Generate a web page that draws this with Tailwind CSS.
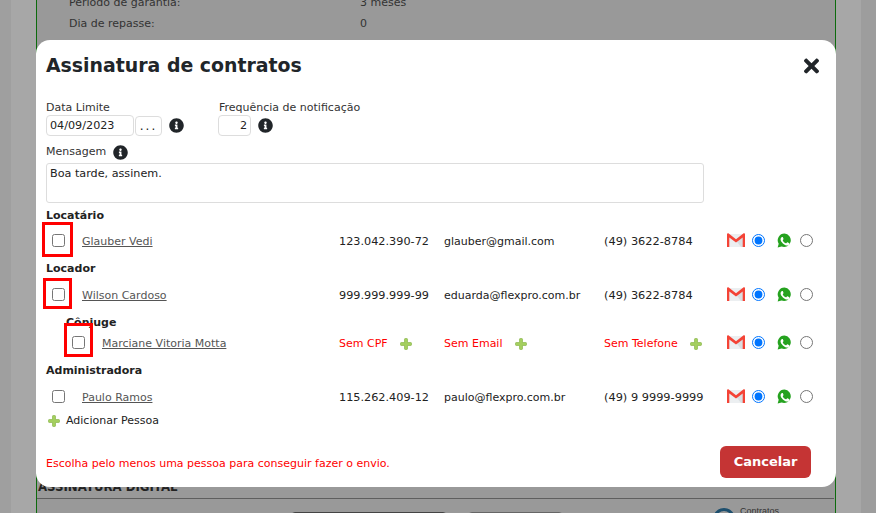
<!DOCTYPE html>
<html lang="pt-BR">
<head>
  <meta charset="UTF-8">
  <title>Assinatura de contratos</title>
  <script src="https://cdn.jsdelivr.net/npm/@tailwindcss/browser@4"></script>
</head>
<body class="relative w-[876px] h-[513px] overflow-hidden bg-[#a0a0a0] font-['DejaVu_Sans',sans-serif] text-[11px] text-[#222]">

<svg class="hidden">
  <symbol id="info" viewBox="0 0 512 512"><path fill="currentColor" d="M256 8C119.043 8 8 119.083 8 256c0 136.997 111.043 248 248 248s248-111.003 248-248C504 119.083 392.957 8 256 8zm0 110c23.196 0 42 18.804 42 42s-18.804 42-42 42-42-18.804-42-42 18.804-42 42-42zm56 254c0 6.627-5.373 12-12 12h-88c-6.627 0-12-5.373-12-12v-24c0-6.627 5.373-12 12-12h12v-64h-12c-6.627 0-12-5.373-12-12v-24c0-6.627 5.373-12 12-12h64c6.627 0 12 5.373 12 12v100h12c6.627 0 12 5.373 12 12v24z"/></symbol>
  <symbol id="plus" viewBox="0 0 12 12"><path fill="#a4cf5e" stroke="#7fae3c" stroke-width="0.6" d="M4.5 1.2c0-.4.3-.7.7-.7h1.6c.4 0 .7.3.7.7v3.3h3.3c.4 0 .7.3.7.7v1.6c0 .4-.3.7-.7.7H7.5v3.3c0 .4-.3.7-.7.7H5.2c-.4 0-.7-.3-.7-.7V7.5H1.2c-.4 0-.7-.3-.7-.7V5.2c0-.4.3-.7.7-.7h3.3z"/></symbol>
  <symbol id="gmail" viewBox="0 0 18 14"><path fill="#eceff1" d="M1 1h16v13H1z"/><path fill="#d9dee1" d="M9 7.5 17 1v13h-3z"/><path fill="#f44336" d="M0 1.2C0 .3 1 0 1.700.500L9 6.200 16.300.500C17 0 18 .3 18 1.200V14h-2.300V4.400L9 9.400 2.300 4.400V14H0z"/></symbol>
  <symbol id="whatsapp" viewBox="0 0 16 16"><path fill="#25a21f" d="M8 .5a7.200 7.200 0 0 0-6.200 10.900L.7 15.500l4.200-1.100A7.200 7.200 0 1 0 8 .5z"/><path fill="#fff" d="M5.700 4.200c-.3 0-.7.100-1 .5-.4.400-.9 1-.9 2.100 0 1.200.9 2.400 1 2.600.2.200 1.700 2.700 4.200 3.600 1.800.6 2.300.3 2.700.2.500-.1 1.300-.6 1.400-1.100.2-.6.200-1 .1-1.100-.1-.2-.2-.2-.5-.4l-1.500-.7c-.2-.1-.4-.1-.6.100l-.7.900c-.1.200-.3.200-.5.100-.9-.4-1.600-.8-2.200-1.500-.4-.5-.8-1-1-1.500-.1-.2 0-.3.100-.5l.4-.5.200-.4v-.4L6.300 4.600c-.1-.3-.3-.4-.6-.4z"/></symbol>
</svg>

<!-- fundo da pagina atras do modal -->
<div class="flex h-full">
  <div class="w-[11px] bg-[#9f9f9f]"></div>
  <div class="w-[25px] bg-[#a7a7a7]"></div>
  <div class="relative w-[800px] h-full flex flex-col bg-[#999] border-l border-r border-[#0d6b0d] text-[#333]">
    <div class="flex mt-[-7px] pl-[32px] h-[21px] items-center"><span class="w-[291px]">Período de garantia:</span><span>3 meses</span></div>
    <div class="flex pl-[32px] h-[21px] items-center"><span class="w-[291px]">Dia de repasse:</span><span>0</span></div>
    <div class="mt-auto">
      <div class="pl-[1px] font-bold text-[11.75px] text-[#222] leading-[12px]">ASSINATURA DIGITAL</div>
      <div class="mt-[5px] h-[1px] bg-[#5e5e5e] mr-[1px]"></div>
      <div class="flex h-[14px] relative">
        <div class="ml-[254px] mt-[13px] w-[156px] h-[8px] shrink-0 border border-[#444] rounded-sm"></div>
        <div class="ml-[21px] mt-[13px] w-[95px] h-[8px] shrink-0 border border-[#666] rounded-sm"></div>
        <div class="ml-[150px] mt-[9px] w-[22px] h-[22px] shrink-0 rounded-full border-[3px] border-[#1d4f6e]"></div>
        <div class="ml-[5px] mt-[6px] text-[9px] font-['Liberation_Sans',sans-serif]">Contratos</div>
      </div>
    </div>
  </div>
  <div class="w-[25px] bg-[#a7a7a7]"></div>
  <div class="flex-1 bg-[#9d9d9d]"></div>
</div>

<!-- modal -->
<div class="absolute left-[36px] top-[40px] w-[800px] h-[447px] bg-white rounded-[14px] pl-[10px] flex flex-col">
  <div class="flex items-center justify-between h-[22px] mt-[15px]">
    <h2 class="-mt-[2px] font-bold text-[18.9px] text-[#212529] leading-none">Assinatura de contratos</h2>
    <svg class="w-[15px] h-[22px] mr-[17px] text-[#212529]" viewBox="0 0 352 512"><path fill="currentColor" d="M242.72 256l100.07-100.07c12.28-12.28 12.28-32.19 0-44.48l-22.24-22.24c-12.28-12.28-32.19-12.28-44.48 0L176 189.28 75.930 89.210c-12.280-12.280-32.190-12.280-44.480 0L9.210 111.450c-12.280 12.280-12.280 32.190 0 44.480L109.280 256 9.210 356.070c-12.280 12.280-12.280 32.190 0 44.480l22.240 22.240c12.280 12.280 32.200 12.280 44.480 0L176 322.720l100.070 100.070c12.280 12.280 32.200 12.280 44.480 0l22.240-22.240c12.280-12.280 12.280-32.190 0-44.480L242.720 256z"/></svg>
  </div>

  <div class="flex mt-[24px]">
    <div class="w-[172px]">
      <div class="h-[14px] leading-[14px] text-[#333]">Data Limite</div>
      <div class="flex items-center">
        <input value="04/09/2023" class="w-[88px] h-[21px] px-[3px] border border-[#ddd] rounded-[4px] text-[11.2px] text-[#222]">
        <button class="ml-[1px] w-[27px] h-[20px] border border-[#ddd] rounded-[4px] text-[12px] tracking-[2px] leading-[18px]">...</button>
        <svg class="ml-[7px] w-[15px] h-[15px] text-[#212529]"><use href="#info"/></svg>
      </div>
    </div>
    <div>
      <div class="pl-[1px] h-[14px] leading-[14px] text-[#333]">Frequência de notificação</div>
      <div class="flex items-center">
        <input value="2" class="w-[33px] h-[21px] px-[3px] text-right border border-[#ddd] rounded-[4px] text-[11.2px] text-[#222]">
        <svg class="ml-[7px] w-[15px] h-[15px] text-[#212529]"><use href="#info"/></svg>
      </div>
    </div>
  </div>

  <div class="flex items-center mt-[9px] h-[15px] text-[#333]">Mensagem<svg class="ml-[7px] w-[15px] h-[15px] text-[#212529]"><use href="#info"/></svg></div>
  <textarea class="mt-[3px] w-[658px] h-[40px] px-[3px] py-[2px] border border-[#ddd] rounded-[3px] resize-none text-[11.2px] text-[#222]">Boa tarde, assinem.</textarea>

  <div class="mt-[6px] h-[14px] leading-[14px] font-bold text-[#222]">Locatário</div>
  <div class="flex items-center h-[24px] mt-[5px]">
    <div class="relative w-[36px] pl-[6px] flex items-center">
      <span class="absolute left-[-4px] top-[-12px] w-[31px] h-[35px] border-[3px] border-[#f00]"></span>
      <input type="checkbox" class="w-[13px] h-[13px]">
    </div>
    <a class="mt-[4px] w-[257px] underline text-[#555]">Glauber Vedi</a>
    <span class="mt-[4px] w-[105px] text-[11.25px]">123.042.390-72</span>
    <span class="mt-[4px] w-[160px]">glauber@gmail.com</span>
    <span class="mt-[4px] w-[123px] text-[11.35px]">(49) 3622-8784</span>
    <svg class="w-[18px] h-[14px]"><use href="#gmail"/></svg>
    <input type="radio" checked class="ml-[7px] w-[13px] h-[13px] accent-[#0075ff]">
    <svg class="ml-[12px] w-[15px] h-[15px]"><use href="#whatsapp"/></svg>
    <input type="radio" class="ml-[8px] w-[13px] h-[13px]">
  </div>

  <div class="mt-[10px] h-[14px] leading-[14px] font-bold text-[#222]">Locador</div>
  <div class="flex items-center h-[24px] mt-[6px]">
    <div class="relative w-[36px] pl-[6px] flex items-center">
      <span class="absolute left-[-3px] top-[-10px] w-[29px] h-[31px] border-[3px] border-[#f00]"></span>
      <input type="checkbox" class="w-[13px] h-[13px]">
    </div>
    <a class="mt-[4px] w-[257px] underline text-[#555]">Wilson Cardoso</a>
    <span class="mt-[4px] w-[105px] text-[11.25px]">999.999.999-99</span>
    <span class="mt-[4px] w-[160px]">eduarda@flexpro.com.br</span>
    <span class="mt-[4px] w-[123px] text-[11.35px]">(49) 3622-8784</span>
    <svg class="w-[18px] h-[14px]"><use href="#gmail"/></svg>
    <input type="radio" checked class="ml-[7px] w-[13px] h-[13px] accent-[#0075ff]">
    <svg class="ml-[12px] w-[15px] h-[15px]"><use href="#whatsapp"/></svg>
    <input type="radio" class="ml-[8px] w-[13px] h-[13px]">
  </div>

  <div class="ml-[20px] mt-[10px] h-[14px] leading-[14px] font-bold text-[#222]">Cônjuge</div>
  <div class="flex items-center h-[20px] mt-[2px]">
    <div class="relative w-[56px] pl-[26px] flex items-center">
      <span class="absolute left-[18px] top-[-13px] w-[29px] h-[34px] border-[3px] border-[#f00]"></span>
      <input type="checkbox" class="w-[13px] h-[13px]">
    </div>
    <a class="mt-[4px] w-[237px] underline text-[#555]">Marciane Vitoria Motta</a>
    <span class="mt-[4px] w-[105px] flex items-center text-[#f00]"><span class="w-[61px]">Sem CPF</span><svg class="w-[12px] h-[12px]"><use href="#plus"/></svg></span>
    <span class="mt-[4px] w-[160px] flex items-center text-[#f00]"><span class="w-[71px]">Sem Email</span><svg class="w-[12px] h-[12px]"><use href="#plus"/></svg></span>
    <span class="mt-[4px] w-[123px] flex items-center text-[#f00]"><span class="w-[86px]">Sem Telefone</span><svg class="w-[12px] h-[12px]"><use href="#plus"/></svg></span>
    <svg class="w-[18px] h-[14px]"><use href="#gmail"/></svg>
    <input type="radio" checked class="ml-[7px] w-[13px] h-[13px] accent-[#0075ff]">
    <svg class="ml-[12px] w-[15px] h-[15px]"><use href="#whatsapp"/></svg>
    <input type="radio" class="ml-[8px] w-[13px] h-[13px]">
  </div>

  <div class="mt-[12px] h-[14px] leading-[14px] font-bold text-[#222]">Administradora</div>
  <div class="flex items-center h-[24px] mt-[6px]">
    <div class="w-[36px] pl-[6px] flex items-center"><input type="checkbox" class="w-[13px] h-[13px]"></div>
    <a class="mt-[4px] w-[257px] underline text-[#555]">Paulo Ramos</a>
    <span class="mt-[4px] w-[105px] text-[11.25px]">115.262.409-12</span>
    <span class="mt-[4px] w-[160px]">paulo@flexpro.com.br</span>
    <span class="mt-[4px] w-[123px] text-[11.35px]">(49) 9 9999-9999</span>
    <svg class="w-[18px] h-[14px]"><use href="#gmail"/></svg>
    <input type="radio" checked class="ml-[7px] w-[13px] h-[13px] accent-[#0075ff]">
    <svg class="ml-[12px] w-[15px] h-[15px]"><use href="#whatsapp"/></svg>
    <input type="radio" class="ml-[8px] w-[13px] h-[13px]">
  </div>

  <div class="flex items-center mt-[6px] h-[14px] ml-[2px]"><svg class="w-[12px] h-[12px]"><use href="#plus"/></svg><span class="ml-[6px]">Adicionar Pessoa</span></div>

  <div class="flex items-center justify-between mt-[18px]">
    <span class="mt-[4px] text-[#f00] text-[11px]">Escolha pelo menos uma pessoa para conseguir fazer o envio.</span>
    <button class="mr-[25px] w-[91px] h-[32px] rounded-[6px] bg-[#c53434] text-white font-bold text-[13px]">Cancelar</button>
  </div>
</div>

</body>
</html>
